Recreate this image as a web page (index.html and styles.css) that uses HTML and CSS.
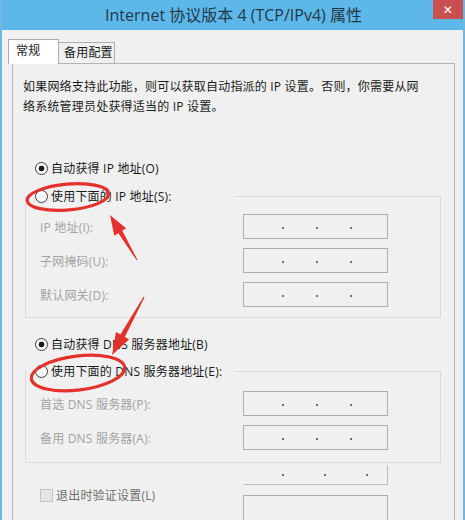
FILE: index.html
```html
<!DOCTYPE html>
<html lang="zh-CN">
<head>
<meta charset="utf-8">
<title>Internet 协议版本 4 (TCP/IPv4) 属性</title>
<link rel="stylesheet" href="styles.css">
</head>
<body>
<div class="window">
  <div class="titlebar">
    <span class="title">Internet 协议版本 4 (TCP/IPv4) 属性</span>
    <span class="close">✕</span>
  </div>
  <div class="content">
    <div class="tabs">
      <div class="tab active">常规</div>
      <div class="tab">备用配置</div>
    </div>
    <div class="panel">
      <p class="intro">如果网络支持此功能，则可以获取自动指派的 IP 设置。否则，你需要从网<br>络系统管理员处获得适当的 IP 设置。</p>

      <div class="radio-row first">
        <span class="radio checked"></span><span>自动获得 IP 地址(O)</span>
      </div>

      <fieldset class="group group-ip">
        <legend class="legend"><span class="radio"></span><span>使用下面的 IP 地址(S):</span></legend>
        <div class="field-row first-field">
          <span class="field-label">IP 地址(I):</span>
          <span class="ipbox"><i></i><i></i><i></i></span>
        </div>
        <div class="field-row">
          <span class="field-label">子网掩码(U):</span>
          <span class="ipbox"><i></i><i></i><i></i></span>
        </div>
        <div class="field-row">
          <span class="field-label">默认网关(D):</span>
          <span class="ipbox"><i></i><i></i><i></i></span>
        </div>
      </fieldset>

      <div class="radio-row dns">
        <span class="radio checked"></span><span>自动获得 DNS 服务器地址(B)</span>
      </div>

      <fieldset class="group group-dns">
        <legend class="legend"><span class="radio"></span><span>使用下面的 DNS 服务器地址(E):</span></legend>
        <div class="field-row first-field-dns">
          <span class="field-label">首选 DNS 服务器(P):</span>
          <span class="ipbox"><i></i><i></i><i></i></span>
        </div>
        <div class="field-row">
          <span class="field-label">备用 DNS 服务器(A):</span>
          <span class="ipbox"><i></i><i></i><i></i></span>
        </div>
      </fieldset>

      <div class="ghost-row">
        <span class="ghost-box"><i></i><i></i><i></i></span>
      </div>

      <div class="check-row">
        <span class="check-label"><span class="checkbox"></span><span>退出时验证设置(L)</span></span>
        <span class="bottom-box"></span>
      </div>
    </div>
  </div>

  <svg class="annotations" width="465" height="520" viewBox="0 0 465 520">
    <ellipse cx="68" cy="197" rx="41" ry="13" transform="rotate(-5 68 197)" fill="none" stroke="#e5312b" stroke-width="3.2"/>
    <ellipse cx="78" cy="373" rx="47" ry="17" transform="rotate(-7 78 373)" fill="none" stroke="#e5312b" stroke-width="3.2"/>
    <polygon points="110,215 126.3,228.5 122.2,230.6 137.4,259.7 136.6,260.3 118.4,233.2 114.3,235.7" fill="#e5312b"/>
    <polygon points="112,355 116,332.1 120.4,334.5 143.5,296.7 144.5,297.3 124.8,336.9 129.2,339.3" fill="#e5312b"/>
  </svg>
</div>
</body>
</html>
```
FILE: styles.css
```css
* { box-sizing: border-box; }

html, body {
  margin: 0;
  padding: 0;
  background: #f0f0f0;
}

body {
  font-family: "Open Sans", "Noto Sans CJK SC", sans-serif;
  font-size: 12px;
  letter-spacing: 0.2px;
  color: #1a1a1a;
}

.window {
  position: relative;
  width: 465px;
  height: 520px;
  overflow: hidden;
  background: #f0f0f0;
  border-left: 2px solid #6cb8e3;
  border-right: 2px solid #6cb8e3;
}

.titlebar {
  display: grid;
  grid-template-columns: 30px 1fr 30px;
  height: 30px;
  background: #5db7e8;
}

.title {
  grid-column: 2;
  align-self: center;
  text-align: center;
  font-size: 16px;
  letter-spacing: 0;
  color: #22384a;
  line-height: 30px;
  padding-left: 2px;
}

.close {
  grid-column: 3;
  height: 19px;
  background: #c9504f;
  color: #fff;
  font-size: 12px;
  font-weight: bold;
  display: flex;
  align-items: center;
  justify-content: center;
  font-family: "DejaVu Sans", sans-serif;
}

.content {
  padding-top: 9px;
}

.tabs {
  display: flex;
  align-items: flex-end;
  margin-left: 6px;
}

.tab {
  border: 1px solid #adadad;
  border-bottom: none;
  background: #f0f0f0;
  height: 21px;
  width: 56px;
  border-left: none;
  padding-left: 5px;
  line-height: 20px;
  font-size: 12px;
}

.tab.active {
  position: relative;
  z-index: 1;
  height: 25px;
  width: 51px;
  margin-bottom: -1px;
  background: #fff;
  border-left: 1px solid #adadad;
  padding-left: 7px;
  line-height: 22px;
}

.panel {
  margin-left: 10px;
  width: 443px;
  height: 470px;
  border: 1px solid #b4b4b4;
  background: #f0f0f0;
}

.intro {
  margin: 0;
  padding: 13px 0 0 10px;
  line-height: 20px;
}

.radio-row {
  display: flex;
  align-items: center;
  gap: 3px;
  height: 20px;
  padding-left: 22px;
}

.radio-row.first { margin-top: 41px; }
.radio-row.dns { margin-top: 16px; }

.radio {
  width: 13px;
  height: 13px;
  border-radius: 50%;
  border: 1px solid #3a3a3a;
  background: #fff;
  flex: none;
}

.radio.checked {
  background: radial-gradient(circle, #1a1a1a 0 2.6px, #fff 3.2px);
}

.group {
  margin: 8px 13px 0 12px;
  padding: 0 0 10px 0;
  border: 1px solid #dadada;
  min-width: 0;
}

.group-dns {
  margin-top: 7px;
  padding-bottom: 12px;
}

.legend {
  display: flex;
  align-items: center;
  gap: 3px;
  width: 208px;
  height: 20px;
  padding: 0 0 0 9px;
  margin: 0;
  background: #f0f0f0;
}

.field-row {
  display: flex;
  align-items: center;
  padding-left: 14px;
  margin-top: 9px;
}

.field-row.first-field { margin-top: 8px; }
.field-row.first-field-dns { margin-top: 10px; }

.field-label {
  width: 203px;
  color: #a3a3a3;
}

.ipbox, .ghost-box {
  display: flex;
  align-items: center;
  gap: 32px;
  width: 145px;
  height: 25px;
  border: 1px solid #adadad;
  background: #f0f0f0;
  padding: 3px 0 0 38px;
}

.ipbox i, .ghost-box i {
  display: block;
  width: 2px;
  height: 2px;
  background: #707070;
}

.ghost-row {
  margin-top: 2px;
  padding-left: 230px;
}

.ghost-box {
  height: 20px;
  border-color: transparent #bdbdbd #bdbdbd transparent;
  padding-top: 0;
  gap: 40px;
}

.check-row {
  display: flex;
  align-items: flex-start;
  padding-left: 27px;
}

.check-label {
  display: flex;
  align-items: center;
  gap: 3px;
  width: 203px;
  height: 20px;
  color: #6e6e6e;
}

.checkbox {
  width: 13px;
  height: 13px;
  border: 1px solid #c4c4c4;
  background: #e4e4e4;
  flex: none;
}

.bottom-box {
  margin-top: 10px;
  width: 145px;
  height: 30px;
  border: 1px solid #adadad;
}

.annotations {
  position: absolute;
  left: -2px;
  top: 0;
  pointer-events: none;
}
```
